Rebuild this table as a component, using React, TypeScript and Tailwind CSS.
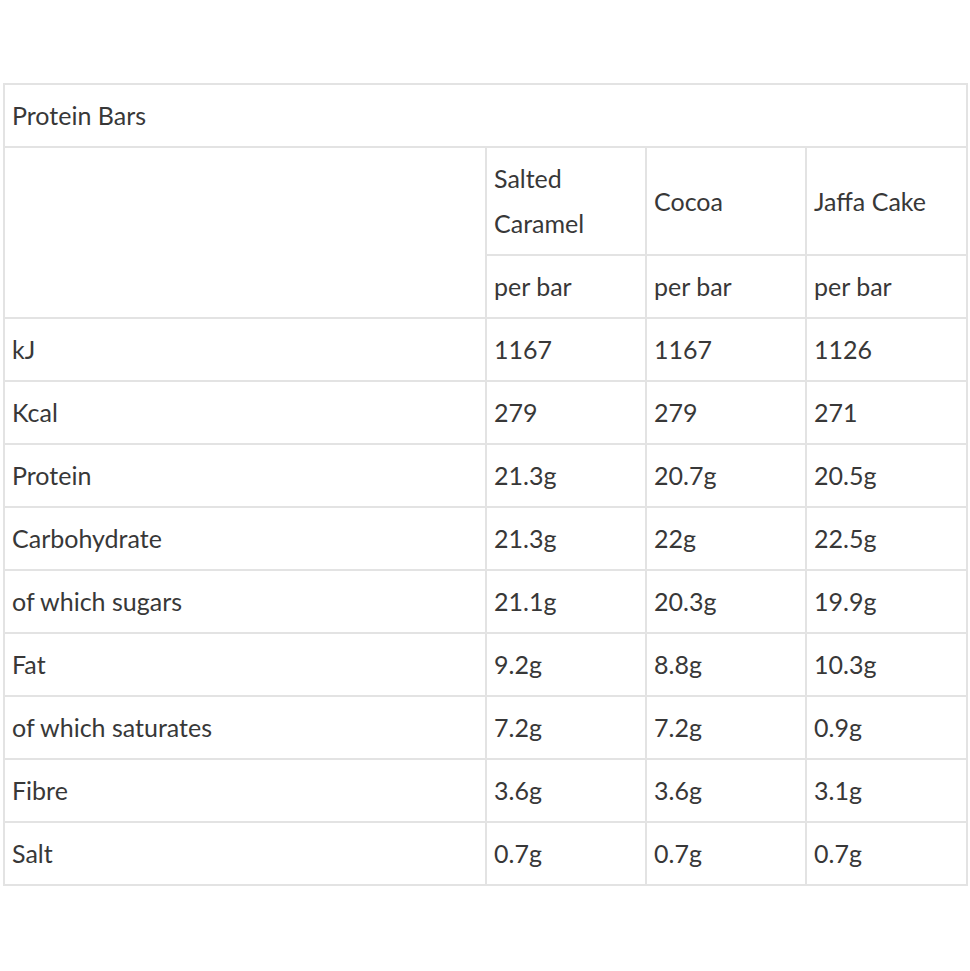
const flavours = ['Salted Caramel', 'Cocoa', 'Jaffa Cake']

const rows: [string, string, string, string][] = [
  ['kJ', '1167', '1167', '1126'],
  ['Kcal', '279', '279', '271'],
  ['Protein', '21.3g', '20.7g', '20.5g'],
  ['Carbohydrate', '21.3g', '22g', '22.5g'],
  ['of which sugars', '21.1g', '20.3g', '19.9g'],
  ['Fat', '9.2g', '8.8g', '10.3g'],
  ['of which saturates', '7.2g', '7.2g', '0.9g'],
  ['Fibre', '3.6g', '3.6g', '3.1g'],
  ['Salt', '0.7g', '0.7g', '0.7g'],
]

const cell = 'border-2 border-[#e3e3e3] pl-[7px] pr-2 py-2 text-left align-middle font-normal'

export default function App() {
  return (
    <div className="min-h-[971px] w-[970px] bg-white pt-[83px] pl-[3px]">
      <table
        className="w-[963px] table-fixed border-collapse text-[25px] leading-[45px] text-[#383838]"
        style={{ fontFamily: 'Lato, "Open Sans", sans-serif' }}
      >
        <colgroup>
          <col className="w-[482px]" />
          <col className="w-[160px]" />
          <col className="w-[160px]" />
          <col className="w-[161px]" />
        </colgroup>
        <tbody>
          <tr>
            <th colSpan={4} className={cell}>
              Protein Bars
            </th>
          </tr>
          <tr>
            <td rowSpan={2} className={cell}></td>
            {flavours.map((f) => (
              <th key={f} className={cell}>
                {f}
              </th>
            ))}
          </tr>
          <tr>
            {flavours.map((f) => (
              <td key={f} className={cell}>
                per bar
              </td>
            ))}
          </tr>
          {rows.map((r) => (
            <tr key={r[0]}>
              {r.map((v, i) => (
                <td key={i} className={cell}>
                  {v}
                </td>
              ))}
            </tr>
          ))}
        </tbody>
      </table>
    </div>
  )
}
